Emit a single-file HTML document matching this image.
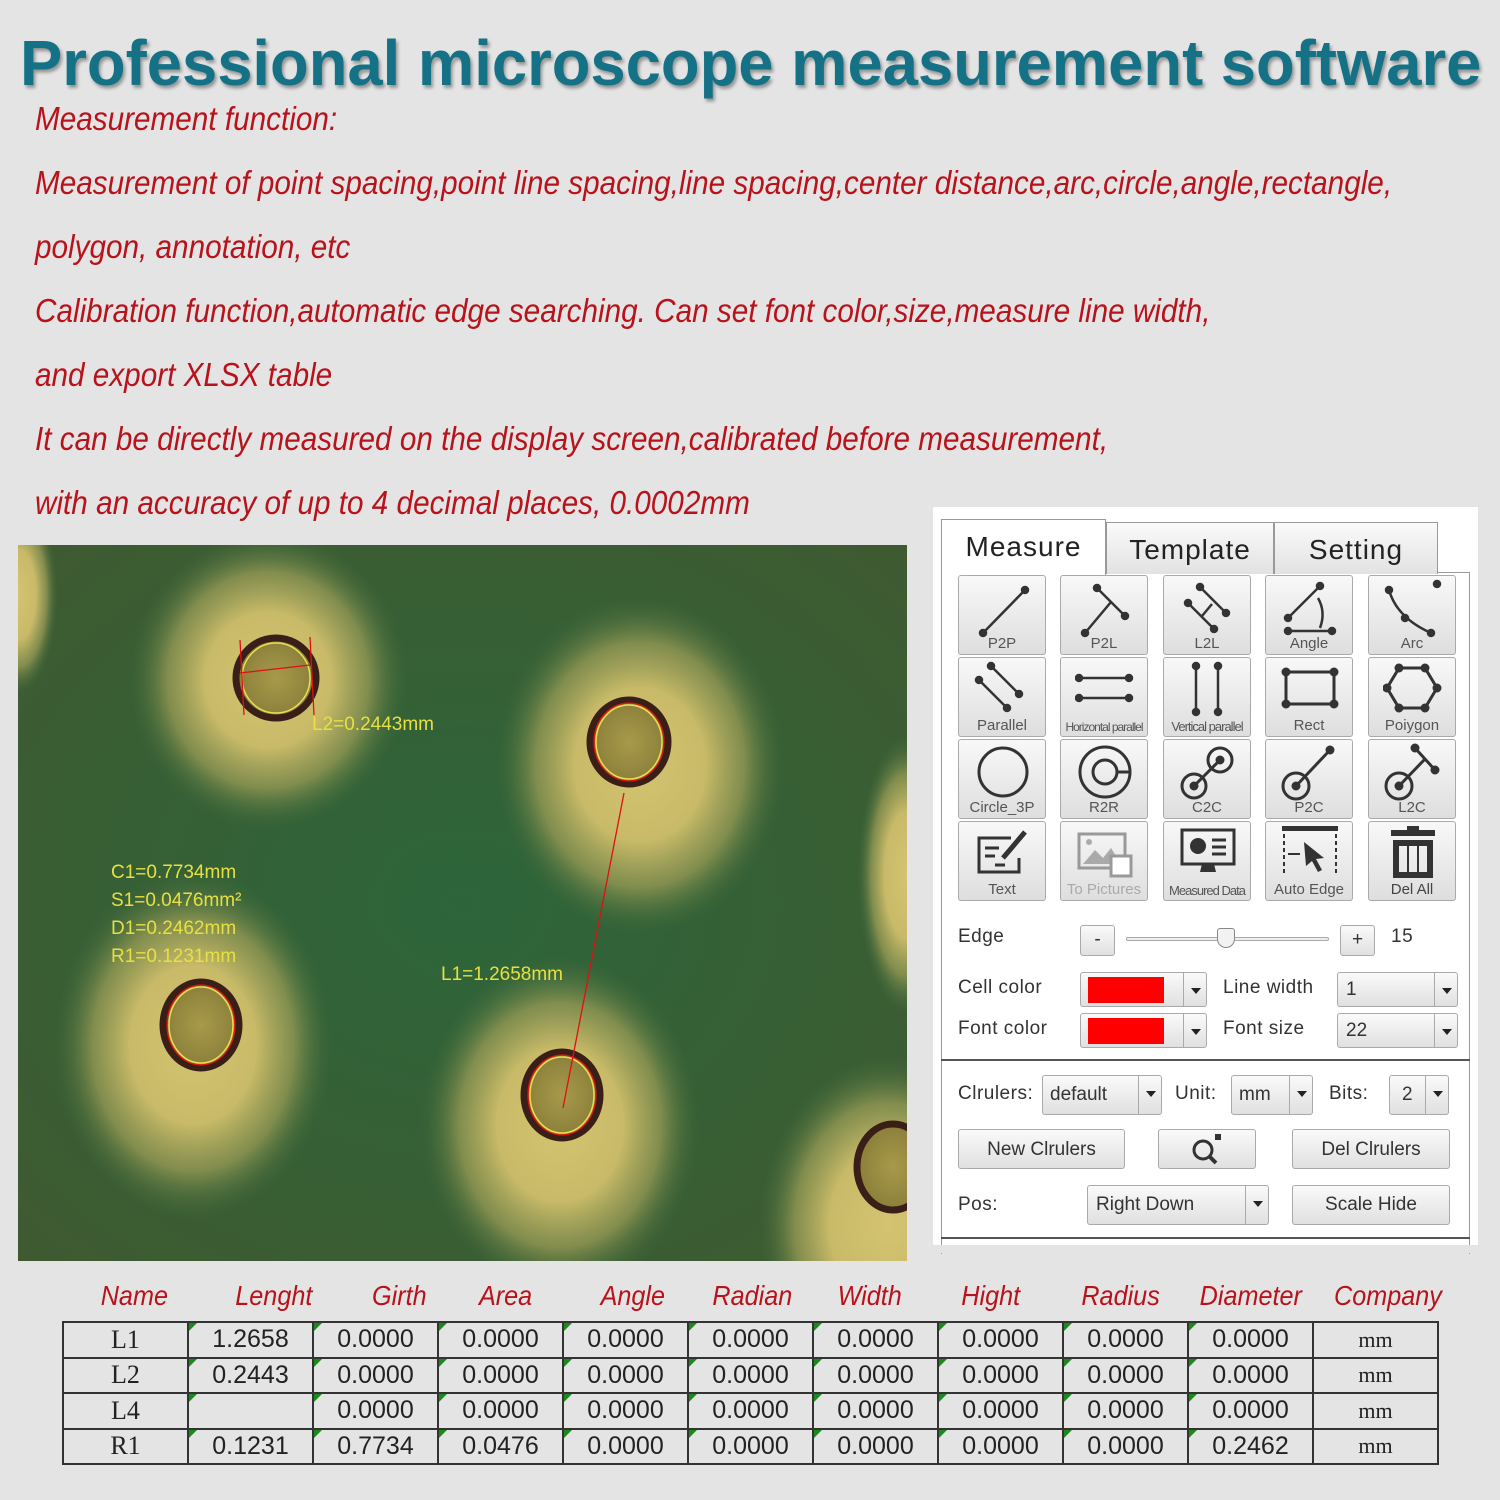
<!DOCTYPE html>
<html><head><meta charset="utf-8">
<style>
*{margin:0;padding:0;box-sizing:border-box}
body{width:1500px;height:1500px;background:#e4e4e4;position:relative;overflow:hidden;font-family:"Liberation Sans",sans-serif}
.title{position:absolute;left:20px;top:26px;font-size:64px;font-weight:bold;color:#157186;white-space:nowrap;text-shadow:2px 3px 3px rgba(0,0,0,.35);transform:scaleX(.99);transform-origin:left}
.red{position:absolute;left:35px;color:#b8121b;font-style:italic;font-size:33px;white-space:nowrap;transform:scaleX(.9);transform-origin:left}
.micro{position:absolute;left:18px;top:545px;width:889px;height:716px}
.panel{position:absolute;left:933px;top:507px;width:545px;height:746px;background:#fff}
.tab{position:absolute;top:15px;height:52px;border:1px solid #999;border-bottom:none;background:linear-gradient(#fafafa,#e2e2e2);font-size:28px;color:#222;text-align:center;line-height:54px;letter-spacing:1px}
.frame{position:absolute;left:8px;top:65px;width:529px;height:682px;border:1px solid #999;border-bottom:none}
.btn{position:absolute;width:88px;height:80px;border:1px solid #aaa;border-radius:3px;background:linear-gradient(#f8f8f8,#dedede)}
.btn svg{position:absolute;left:14px;top:2px}
.btn span{position:absolute;left:0;right:0;bottom:2px;text-align:center;font-size:15px;color:#555;white-space:nowrap}
.lab{position:absolute;font-size:19px;color:#333;letter-spacing:.5px}
.sb{position:absolute;border:1px solid #aaa;border-radius:3px;background:linear-gradient(#fafafa,#e0e0e0);font-size:19px;color:#333;line-height:34px}
.sb .ar{position:absolute;right:0;top:0;bottom:0;width:23px;border-left:1px solid #aaa}
.sb .ar:after{content:"";position:absolute;left:7px;top:15px;border:5px solid transparent;border-top:6px solid #222}
table{position:absolute;left:62px;top:1321px;border-collapse:collapse}
td{border:2px solid #333;width:125px;height:35.5px;text-align:center;font-size:25px;color:#222;position:relative;padding:0}
td.n{font-family:"Liberation Serif",serif;font-size:26px}
td:not(.n):not(.u)::before{content:"";position:absolute;left:0;top:0;border:4px solid transparent;border-left:4px solid #1a8a1a;border-top:4px solid #1a8a1a}
td.u{font-family:"Liberation Serif",serif;font-size:22px}
.th{position:absolute;top:1280px;color:#b8121b;font-style:italic;font-size:28px;white-space:nowrap;transform:scaleX(.9)}
</style></head><body>
<div class="title">Professional microscope measurement software</div>
<div class="red" style="top:100px">Measurement function:</div>
<div class="red" style="top:164px">Measurement of point spacing,point line spacing,line spacing,center distance,arc,circle,angle,rectangle,</div>
<div class="red" style="top:228px">polygon, annotation, etc</div>
<div class="red" style="top:292px">Calibration function,automatic edge searching. Can set font color,size,measure line width,</div>
<div class="red" style="top:356px">and export XLSX table</div>
<div class="red" style="top:420px">It can be directly measured on the display screen,calibrated before measurement,</div>
<div class="red" style="top:484px">with an accuracy of up to 4 decimal places, 0.0002mm</div>

<svg class="micro" viewBox="0 0 889 716">
<defs>
<radialGradient id="halo"><stop offset="0" stop-color="#d4c472"/><stop offset=".45" stop-color="#c8ba68"/><stop offset=".72" stop-color="#8e9552" stop-opacity=".85"/><stop offset="1" stop-color="#3e6a3a" stop-opacity="0"/></radialGradient>
<radialGradient id="bg" cx=".5" cy=".5" r=".7"><stop offset="0" stop-color="#2d653a"/><stop offset="1" stop-color="#3f5a31"/></radialGradient>
<radialGradient id="pad"><stop offset="0" stop-color="#a89a4a"/><stop offset="1" stop-color="#8a7e3a"/></radialGradient>
</defs>
<rect width="889" height="716" fill="url(#bg)"/>
<ellipse cx="250" cy="135" rx="140" ry="150" fill="url(#halo)"/>
<ellipse cx="622" cy="220" rx="145" ry="170" fill="url(#halo)"/>
<ellipse cx="175" cy="500" rx="140" ry="175" fill="url(#halo)"/>
<ellipse cx="542" cy="580" rx="140" ry="170" fill="url(#halo)"/>
<ellipse cx="870" cy="680" rx="130" ry="170" fill="url(#halo)"/>
<ellipse cx="889" cy="330" rx="50" ry="140" fill="url(#halo)"/>
<ellipse cx="0" cy="50" rx="40" ry="100" fill="url(#halo)"/>
<g stroke="#3a1e18" stroke-width="7" fill="url(#pad)">
<ellipse cx="258" cy="133" rx="40" ry="40"/>
<ellipse cx="611" cy="197" rx="39" ry="42"/>
<ellipse cx="183" cy="480" rx="38" ry="43"/>
<ellipse cx="544" cy="550" rx="38" ry="43"/>
<ellipse cx="875" cy="622" rx="36" ry="43"/>
</g>
<g fill="none" stroke="#e8e050" stroke-width="1.5">
<ellipse cx="258" cy="133" rx="34" ry="35"/>
<ellipse cx="611" cy="197" rx="33" ry="37"/>
<ellipse cx="183" cy="480" rx="32" ry="38"/>
<ellipse cx="544" cy="550" rx="32" ry="38"/>
</g>
<g stroke="#e01010" stroke-width="1.3" fill="none">
<line x1="606" y1="248" x2="545" y2="563"/>
<line x1="222" y1="128" x2="292" y2="120"/>
<line x1="222" y1="95" x2="226" y2="170"/>
<line x1="292" y1="92" x2="296" y2="170"/>
<ellipse cx="183" cy="480" rx="34" ry="40"/>
<ellipse cx="544" cy="550" rx="34" ry="40"/>
<ellipse cx="611" cy="197" rx="35" ry="39"/>
</g>
<g fill="#e8e040" font-family="Liberation Sans,sans-serif" font-size="19">
<text x="294" y="185">L2=0.2443mm</text>
<text x="93" y="333">C1=0.7734mm</text>
<text x="93" y="361">S1=0.0476mm²</text>
<text x="93" y="389">D1=0.2462mm</text>
<text x="93" y="417">R1=0.1231mm</text>
<text x="423" y="435">L1=1.2658mm</text>
</g>
</svg>

<div class="panel">
<div class="frame"></div>
<div class="tab" style="left:173px;width:168px">Template</div>
<div class="tab" style="left:341px;width:164px">Setting</div>
<div class="tab" style="left:8px;width:165px;height:56px;top:12px;background:#fff;z-index:2">Measure</div>
<div style="position:absolute;left:8px;top:552px;width:529px;border-top:2px solid #555"></div>
<div style="position:absolute;left:8px;top:730px;width:529px;border-top:2px solid #555"></div>
<div style="position:absolute;left:0;top:738px;width:545px;height:8px;background:#e4e4e4"></div>
</div>

<div class="btn" style="left:958px;top:575px"><svg width="60" height="60" viewBox="0 0 60 60" stroke="#333" stroke-width="2.5" fill="#333"><line x1="10" y1="55" x2="52" y2="12"/><circle cx="10" cy="55" r="3"/><circle cx="52" cy="12" r="3"/></svg><span>P2P</span></div>
<div class="btn" style="left:1060px;top:575px"><svg width="60" height="60" viewBox="0 0 60 60" stroke="#333" stroke-width="2.5" fill="#333"><line x1="22" y1="10" x2="50" y2="38"/><line x1="10" y1="55" x2="36" y2="24"/><circle cx="22" cy="10" r="3"/><circle cx="50" cy="38" r="3"/><circle cx="10" cy="55" r="3"/></svg><span>P2L</span></div>
<div class="btn" style="left:1163px;top:575px"><svg width="60" height="60" viewBox="0 0 60 60" stroke="#333" stroke-width="2.5" fill="#333"><line x1="22" y1="9" x2="48" y2="35"/><line x1="10" y1="25" x2="36" y2="51"/><line x1="24" y1="38" x2="34" y2="26"/><circle cx="22" cy="9" r="3"/><circle cx="48" cy="35" r="3"/><circle cx="10" cy="25" r="3"/><circle cx="36" cy="51" r="3"/></svg><span>L2L</span></div>
<div class="btn" style="left:1265px;top:575px"><svg width="60" height="60" viewBox="0 0 60 60" stroke="#333" stroke-width="2.5" fill="#333"><line x1="8" y1="40" x2="40" y2="8"/><line x1="8" y1="53" x2="52" y2="53"/><path d="M38 20 Q46 34 40 50" fill="none"/><circle cx="8" cy="40" r="3"/><circle cx="40" cy="8" r="3"/><circle cx="8" cy="53" r="3"/><circle cx="52" cy="53" r="3"/></svg><span>Angle</span></div>
<div class="btn" style="left:1368px;top:575px"><svg width="60" height="60" viewBox="0 0 60 60" stroke="#333" stroke-width="2.5" fill="#333"><path d="M6 12 Q14 40 48 55" fill="none"/><circle cx="6" cy="12" r="3"/><circle cx="22" cy="40" r="3"/><circle cx="48" cy="55" r="3"/><circle cx="54" cy="6" r="3"/></svg><span>Arc</span></div>

<div class="btn" style="left:958px;top:657px"><svg width="60" height="60" viewBox="0 0 60 60" stroke="#333" stroke-width="2.5" fill="#333"><line x1="18" y1="6" x2="46" y2="34"/><line x1="6" y1="20" x2="34" y2="48"/><circle cx="18" cy="6" r="3"/><circle cx="46" cy="34" r="3"/><circle cx="6" cy="20" r="3"/><circle cx="34" cy="48" r="3"/></svg><span>Parallel</span></div>
<div class="btn" style="left:1060px;top:657px"><svg width="60" height="60" viewBox="0 0 60 60" stroke="#333" stroke-width="2.5" fill="#333"><line x1="4" y1="18" x2="54" y2="18"/><line x1="4" y1="38" x2="54" y2="38"/><circle cx="4" cy="18" r="3"/><circle cx="54" cy="18" r="3"/><circle cx="4" cy="38" r="3"/><circle cx="54" cy="38" r="3"/></svg><span style="font-size:12px;letter-spacing:-1px">Horizontal parallel</span></div>
<div class="btn" style="left:1163px;top:657px"><svg width="60" height="60" viewBox="0 0 60 60" stroke="#333" stroke-width="2.5" fill="#333"><line x1="18" y1="6" x2="18" y2="52"/><line x1="40" y1="6" x2="40" y2="52"/><circle cx="18" cy="6" r="3"/><circle cx="18" cy="52" r="3"/><circle cx="40" cy="6" r="3"/><circle cx="40" cy="52" r="3"/></svg><span style="font-size:13px;letter-spacing:-1px">Vertical parallel</span></div>
<div class="btn" style="left:1265px;top:657px"><svg width="60" height="60" viewBox="0 0 60 60" stroke="#333" stroke-width="3" fill="#333"><rect x="6" y="12" width="48" height="32" fill="none"/><circle cx="6" cy="12" r="3"/><circle cx="54" cy="12" r="3"/><circle cx="6" cy="44" r="3"/><circle cx="54" cy="44" r="3"/></svg><span>Rect</span></div>
<div class="btn" style="left:1368px;top:657px"><svg width="60" height="60" viewBox="0 0 60 60" stroke="#333" stroke-width="3" fill="#333"><polygon points="16,8 42,8 54,28 42,48 16,48 4,28" fill="none"/><circle cx="16" cy="8" r="3"/><circle cx="42" cy="8" r="3"/><circle cx="54" cy="28" r="3"/><circle cx="42" cy="48" r="3"/><circle cx="16" cy="48" r="3"/><circle cx="4" cy="28" r="3"/></svg><span>Poiygon</span></div>

<div class="btn" style="left:958px;top:739px"><svg width="60" height="60" viewBox="0 0 60 60" stroke="#333" stroke-width="3" fill="none"><circle cx="30" cy="30" r="24"/></svg><span>Circle_3P</span></div>
<div class="btn" style="left:1060px;top:739px"><svg width="60" height="60" viewBox="0 0 60 60" stroke="#333" stroke-width="3" fill="none"><circle cx="30" cy="30" r="25"/><circle cx="30" cy="30" r="12"/><line x1="42" y1="30" x2="55" y2="30"/></svg><span>R2R</span></div>
<div class="btn" style="left:1163px;top:739px"><svg width="60" height="60" viewBox="0 0 60 60" stroke="#333" stroke-width="3" fill="#333"><circle cx="16" cy="44" r="12" fill="none"/><circle cx="42" cy="18" r="12" fill="none"/><line x1="16" y1="44" x2="42" y2="18"/><circle cx="16" cy="44" r="3"/><circle cx="42" cy="18" r="3"/></svg><span>C2C</span></div>
<div class="btn" style="left:1265px;top:739px"><svg width="60" height="60" viewBox="0 0 60 60" stroke="#333" stroke-width="3" fill="#333"><circle cx="16" cy="44" r="13" fill="none"/><line x1="16" y1="44" x2="50" y2="8"/><circle cx="16" cy="44" r="3"/><circle cx="50" cy="8" r="3"/></svg><span>P2C</span></div>
<div class="btn" style="left:1368px;top:739px"><svg width="60" height="60" viewBox="0 0 60 60" stroke="#333" stroke-width="3" fill="#333"><circle cx="16" cy="44" r="13" fill="none"/><line x1="32" y1="6" x2="52" y2="28"/><line x1="16" y1="44" x2="42" y2="17"/><circle cx="16" cy="44" r="3"/><circle cx="32" cy="6" r="3"/><circle cx="52" cy="28" r="3"/></svg><span>L2C</span></div>

<div class="btn" style="left:958px;top:821px"><svg width="60" height="60" viewBox="0 0 60 60" stroke="#333" stroke-width="3" fill="none"><path d="M38 14 H6 V48 H46 V34"/><line x1="12" y1="24" x2="26" y2="24"/><line x1="12" y1="32" x2="22" y2="32"/><line x1="22" y1="41" x2="32" y2="41"/><line x1="30" y1="34" x2="52" y2="8" stroke-width="5"/></svg><span>Text</span></div>
<div class="btn" style="left:1060px;top:821px"><svg width="60" height="60" viewBox="0 0 60 60" stroke="#999" stroke-width="3" fill="#aaa"><rect x="4" y="10" width="46" height="34" fill="none"/><path d="M8 40 L20 26 L28 34 L36 24 L46 40Z" stroke="none"/><circle cx="14" cy="18" r="3" stroke="none"/><rect x="36" y="32" width="20" height="20" fill="#fff"/></svg><span style="color:#aaa">To Pictures</span></div>
<div class="btn" style="left:1163px;top:821px"><svg width="60" height="60" viewBox="0 0 60 60" stroke="#333" stroke-width="3" fill="#333"><rect x="4" y="6" width="52" height="34" fill="none"/><circle cx="20" cy="22" r="8" stroke="none"/><line x1="34" y1="16" x2="48" y2="16"/><line x1="34" y1="23" x2="48" y2="23"/><line x1="34" y1="30" x2="48" y2="30"/><path d="M24 40 L22 48 H38 L36 40" stroke="none"/></svg><span style="font-size:13px;letter-spacing:-1px">Measured Data</span></div>
<div class="btn" style="left:1265px;top:821px"><svg width="60" height="60" viewBox="0 0 60 60" stroke="#333" stroke-width="2" fill="#333"><rect x="2" y="2" width="56" height="5" stroke="none"/><line x1="4" y1="10" x2="4" y2="52" stroke-dasharray="4 3"/><line x1="56" y1="10" x2="56" y2="52" stroke-dasharray="4 3"/><path d="M24 18 L44 34 L36 35 L42 46 L38 48 L32 37 L26 42Z" stroke="none"/><line x1="8" y1="30" x2="20" y2="30"/></svg><span>Auto Edge</span></div>
<div class="btn" style="left:1368px;top:821px"><svg width="60" height="60" viewBox="0 0 60 60" fill="#333"><rect x="8" y="6" width="44" height="6"/><rect x="24" y="2" width="12" height="5"/><path d="M10 16 H50 V54 H10Z M16 22 V48 H24 V22Z M26 22 V48 H34 V22Z M36 22 V48 H44 V22Z" fill-rule="evenodd"/></svg><span style="color:#444">Del All</span></div>

<div class="lab" style="left:958px;top:926px">Edge</div>
<div class="sb" style="left:1080px;top:925px;width:35px;height:31px;text-align:center;line-height:28px">-</div>
<div style="position:absolute;left:1126px;top:937px;width:203px;height:4px;border:1px solid #aaa;border-radius:2px;background:#eee"></div>
<div style="position:absolute;left:1217px;top:928px;width:18px;height:20px;border:1px solid #888;border-radius:3px 3px 9px 9px;background:#f2f2f2"></div>
<div class="sb" style="left:1340px;top:925px;width:35px;height:31px;text-align:center;line-height:28px">+</div>
<div class="lab" style="left:1391px;top:926px">15</div>

<div class="lab" style="left:958px;top:977px">Cell color</div>
<div class="sb" style="left:1080px;top:972px;width:127px;height:35px"><div style="position:absolute;left:7px;top:4px;width:76px;height:26px;background:#f00"></div><div class="ar"></div></div>
<div class="lab" style="left:1223px;top:977px">Line width</div>
<div class="sb" style="left:1337px;top:972px;width:121px;height:35px;padding-left:8px">1<div class="ar"></div></div>

<div class="lab" style="left:958px;top:1018px">Font color</div>
<div class="sb" style="left:1080px;top:1013px;width:127px;height:35px"><div style="position:absolute;left:7px;top:4px;width:76px;height:26px;background:#f00"></div><div class="ar"></div></div>
<div class="lab" style="left:1223px;top:1018px">Font size</div>
<div class="sb" style="left:1337px;top:1013px;width:121px;height:35px;padding-left:8px">22<div class="ar"></div></div>

<div class="lab" style="left:958px;top:1083px">Clrulers:</div>
<div class="sb" style="left:1042px;top:1075px;width:120px;height:40px;padding-left:7px;line-height:38px">default<div class="ar"></div></div>
<div class="lab" style="left:1175px;top:1083px">Unit:</div>
<div class="sb" style="left:1231px;top:1075px;width:82px;height:40px;padding-left:7px;line-height:38px">mm<div class="ar"></div></div>
<div class="lab" style="left:1329px;top:1083px">Bits:</div>
<div class="sb" style="left:1389px;top:1075px;width:60px;height:40px;padding-left:12px;line-height:38px">2<div class="ar"></div></div>

<div class="sb" style="left:958px;top:1129px;width:167px;height:40px;text-align:center;line-height:40px">New Clrulers</div>
<div class="sb" style="left:1158px;top:1129px;width:98px;height:40px"><svg width="98" height="40" viewBox="0 0 98 40"><circle cx="44" cy="20" r="9" fill="none" stroke="#333" stroke-width="3"/><line x1="51" y1="27" x2="57" y2="33" stroke="#333" stroke-width="4"/><rect x="56" y="4" width="6" height="6" fill="#333"/></svg></div>
<div class="sb" style="left:1292px;top:1129px;width:158px;height:40px;text-align:center;line-height:40px">Del Clrulers</div>

<div class="lab" style="left:958px;top:1194px">Pos:</div>
<div class="sb" style="left:1087px;top:1185px;width:182px;height:40px;padding-left:8px;line-height:38px">Right Down<div class="ar"></div></div>
<div class="sb" style="left:1292px;top:1185px;width:158px;height:40px;text-align:center;line-height:38px">Scale Hide</div>

<div class="th" style="left:97px">Name</div>
<div class="th" style="left:231px">Lenght</div>
<div class="th" style="left:369px">Girth</div>
<div class="th" style="left:476px">Area</div>
<div class="th" style="left:597px">Angle</div>
<div class="th" style="left:708px">Radian</div>
<div class="th" style="left:834px">Width</div>
<div class="th" style="left:958px">Hight</div>
<div class="th" style="left:1077px">Radius</div>
<div class="th" style="left:1194px">Diameter</div>
<div class="th" style="left:1328px">Company</div>

<table>
<tr><td class="n">L1</td><td>1.2658</td><td>0.0000</td><td>0.0000</td><td>0.0000</td><td>0.0000</td><td>0.0000</td><td>0.0000</td><td>0.0000</td><td>0.0000</td><td class="u">mm</td></tr>
<tr><td class="n">L2</td><td>0.2443</td><td>0.0000</td><td>0.0000</td><td>0.0000</td><td>0.0000</td><td>0.0000</td><td>0.0000</td><td>0.0000</td><td>0.0000</td><td class="u">mm</td></tr>
<tr><td class="n">L4</td><td></td><td>0.0000</td><td>0.0000</td><td>0.0000</td><td>0.0000</td><td>0.0000</td><td>0.0000</td><td>0.0000</td><td>0.0000</td><td class="u">mm</td></tr>
<tr><td class="n">R1</td><td>0.1231</td><td>0.7734</td><td>0.0476</td><td>0.0000</td><td>0.0000</td><td>0.0000</td><td>0.0000</td><td>0.0000</td><td>0.2462</td><td class="u">mm</td></tr>
</table>
</body></html>
